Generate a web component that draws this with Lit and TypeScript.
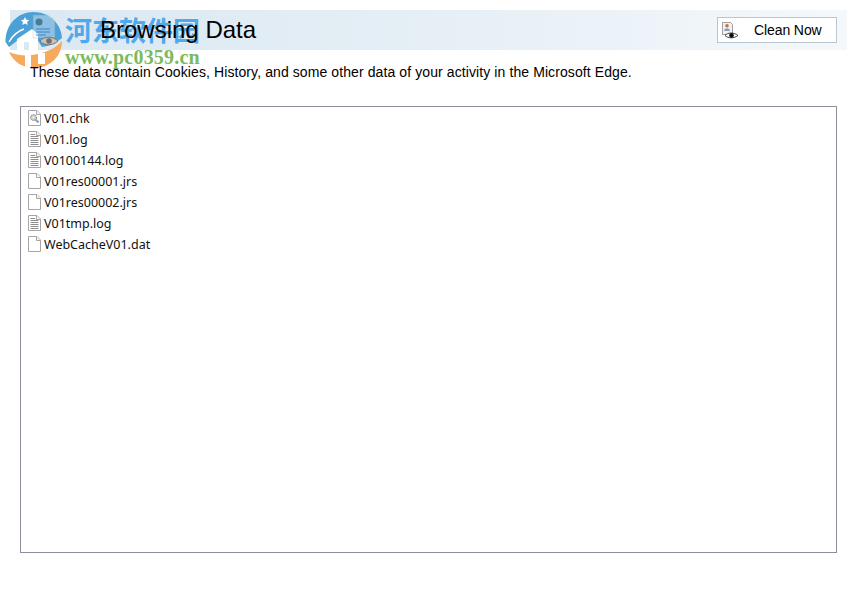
import { LitElement, html, css, svg } from 'lit';
import { customElement } from 'lit/decorators.js';

type FileKind = 'chk' | 'log' | 'blank';

const FILES: { name: string; kind: FileKind }[] = [
  { name: 'V01.chk', kind: 'chk' },
  { name: 'V01.log', kind: 'log' },
  { name: 'V0100144.log', kind: 'log' },
  { name: 'V01res00001.jrs', kind: 'blank' },
  { name: 'V01res00002.jrs', kind: 'blank' },
  { name: 'V01tmp.log', kind: 'log' },
  { name: 'WebCacheV01.dat', kind: 'blank' },
];

function fileIcon(kind: FileKind) {
  return html`<svg class="file-icon" width="14" height="16" viewBox="0 0 14 16">
    <path d="M.5.5h8.500l3.500 3.500v11.500h-12z" fill="#fff" stroke="#a6a6a6" />
    <path d="M8.500.5v4h4" fill="#f4f4f4" stroke="#a6a6a6" />
    ${kind === 'log'
      ? svg`<path d="M2.500 3.500h4.500M2.500 5.500h8M2.500 7.500h8M2.500 9.500h8M2.500 11.500h8M2.500 13.500h8" stroke="#8e8e8e" />`
      : ''}
    ${kind === 'chk'
      ? svg`<circle cx="5.500" cy="7.500" r="3" fill="#c9c9c9" stroke="#8b8b8b" stroke-dasharray="1.500 .7" />
          <circle cx="5.500" cy="7.500" r="1" fill="#fff" />
          <path d="M7.500 9.500l3 3" stroke="#7ea3c8" stroke-width="2.200" />`
      : ''}
  </svg>`;
}

@customElement('app-root')
export class AppRoot extends LitElement {
  static styles = css`
    :host {
      display: block;
      position: relative;
      height: 593px;
      overflow: hidden;
      background: #fff;
      font-family: 'Liberation Sans', Arial, sans-serif;
      color: #000;
    }

    .page {
      display: flex;
      flex-direction: column;
      padding: 10px 10px 0 10px;
    }

    .banner {
      display: flex;
      align-items: center;
      justify-content: space-between;
      height: 40px;
      padding: 0 10px 0 90px;
      background: linear-gradient(90deg, #dbe8f2 0%, #e4eef5 45%, #f4f8fb 100%);
    }

    h1 {
      position: relative;
      z-index: 1;
      margin: 0;
      font-size: 24px;
      font-weight: 400;
      line-height: 38px;
    }

    .clean-btn {
      display: flex;
      align-items: center;
      box-sizing: border-box;
      width: 120px;
      height: 26px;
      padding: 0 0 0 4px;
      border: 1px solid #b9c7d4;
      background: #fff;
      font-size: 14px;
      letter-spacing: -0.1px;
      color: #000;
    }

    .clean-btn span {
      margin-left: 15px;
    }

    .desc {
      position: relative;
      z-index: 1;
      margin: 14px 0 0 20px;
      font-size: 14px;
      line-height: 16px;
      letter-spacing: 0.095px;
    }

    .file-box {
      box-sizing: border-box;
      height: 447px;
      margin: 26px 10px 0 10px;
      padding: 0 7px;
      border: 1px solid #8b909c;
      background: #fff;
    }

    .file-row {
      display: flex;
      align-items: center;
      gap: 2px;
      height: 21px;
      font-family: 'Noto Sans', 'Open Sans', sans-serif;
      font-size: 12.5px;
      color: #111;
    }

    .file-row span {
      padding-top: 2px;
    }

    .watermark {
      position: absolute;
      left: 5px;
      top: 11px;
      width: 200px;
      height: 58px;
      pointer-events: none;
    }

    .logo {
      position: absolute;
      left: 0;
      top: 0;
    }

    .wm-cn {
      position: absolute;
      left: 60px;
      top: 1px;
      font-family: 'Noto Sans CJK SC', sans-serif;
      font-size: 27px;
      font-weight: 700;
      line-height: 36px;
      white-space: nowrap;
      color: rgba(62, 160, 232, 0.9);
    }

    .wm-url {
      position: absolute;
      left: 60px;
      top: 36px;
      font-family: 'Liberation Serif', serif;
      font-size: 20px;
      font-weight: 700;
      line-height: 20px;
      letter-spacing: 0.2px;
      white-space: nowrap;
      color: #7cba5e;
    }
  `;

  render() {
    return html`
      <div class="page">
        <div class="banner">
          <h1>Browsing Data</h1>
          <div class="clean-btn">
            <svg width="17" height="17" viewBox="0 0 17 17">
              <path d="M.5.5h8l2 2v10h-10z" fill="#f1f1f1" stroke="#a0a0a0" />
              <circle cx="5" cy="3.800" r="1.800" fill="#b8764a" />
              <path d="M2 9c.3-2 1.500-2.800 3-2.800S7.800 7 8 9z" fill="#8f9db0" />
              <path d="M3 13.500C6 10.200 12 10.200 16 13.500 12 16.600 6 16.600 3 13.500z" fill="#fff" stroke="#2a2a2a" stroke-width=".9" />
              <circle cx="9.500" cy="13.400" r="2.300" fill="#0c0c0c" />
            </svg>
            <span>Clean Now</span>
          </div>
        </div>
        <div class="desc">
          These data contain Cookies, History, and some other data of your activity in the Microsoft Edge.
        </div>
        <div class="file-box">
          ${FILES.map(
            (f) => html`<div class="file-row">${fileIcon(f.kind)}<span>${f.name}</span></div>`
          )}
        </div>
      </div>
      <div class="watermark">
        <svg class="logo" width="60" height="60" viewBox="0 0 60 60">
          <!-- blue cap -->
          <path d="M.5 31C.5 13 13 1 28.500 1 44 1 56 12 57 27c-6 5-13 8-20 9L26 19 4 36z" fill="#4ba0d6" />
          <!-- white swoosh over the cap -->
          <path d="M4 31C8 24 13 20 19 18" fill="none" stroke="#fff" stroke-width="1.500" />
          <!-- house -->
          <path d="M27 18l6 5v19H24V31h-5v11h-7V28z" fill="#fff" />
          <!-- orange crescent with two columns cut out -->
          <path d="M4 41c7 3 15 4 23 3 13-2 23-6 30-14 0 15-12 27-28 27C17 57 8 50 4 41z" fill="#f7aa5c" />
          <path d="M20 43h6v14h-6zM33 42h7v11h-7z" fill="#fff" />
          <path d="M20 6l1.300 2.700 3 .4-2.200 2 .6 3-2.700-1.500-2.700 1.500.6-3-2.200-2 3-.4z" fill="#fff" />
          <!-- faded report icon under the watermark -->
          <path d="M28 4h16l6 6v17H28z" fill="#eef3f8" opacity=".4" stroke="#a4a4a4" stroke-width=".6" />
          <circle cx="34" cy="11" r="3.500" fill="#3f6d85" opacity=".85" />
          <path d="M31 18h14M31 21h14M31 24h10" stroke="#2f74c0" opacity=".8" />
          <path d="M35 30c4-5 13-5 18 0-5 5-14 5-18 0z" fill="#c9c2b6" stroke="#777" />
          <circle cx="44" cy="30" r="2.800" fill="#6f6f6f" />
        </svg>
        <div class="wm-cn">河东软件园</div>
        <div class="wm-url">www.pc0359.cn</div>
      </div>
    `;
  }
}

declare global {
  interface HTMLElementTagNameMap {
    'app-root': AppRoot;
  }
}
